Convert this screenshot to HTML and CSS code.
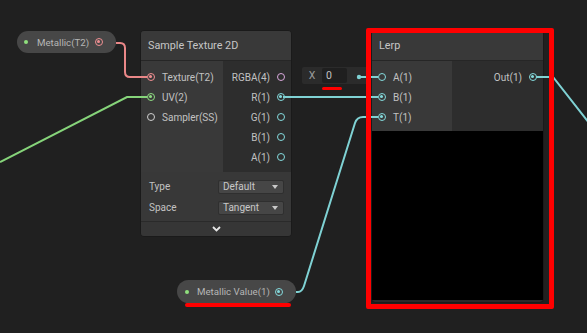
FILE: index.html
```html
<!DOCTYPE html>
<html lang="en">
<head>
  <meta charset="UTF-8" />
  <title>Shader Graph - Lerp</title>
  <link rel="stylesheet" href="styles.css">
</head>
<body>
  <div class="graph">

    <!-- property: Metallic(T2) -->
    <div class="prop prop-tex">
      <span class="prop-dot"></span>
      <span class="prop-name">Metallic(T2)</span>
      <span class="port pink on"></span>
    </div>

    <!-- Sample Texture 2D -->
    <div class="node node-sample">
      <div class="node-title">Sample Texture 2D</div>
      <div class="ports">
        <div class="ins">
          <div class="row"><span class="port pink on"></span>Texture(T2)</div>
          <div class="row"><span class="port green on"></span>UV(2)</div>
          <div class="row"><span class="port white"></span>Sampler(SS)</div>
        </div>
        <div class="outs">
          <div class="row">RGBA(4)<span class="port violet"></span></div>
          <div class="row">R(1)<span class="port cyan on"></span></div>
          <div class="row">G(1)<span class="port cyan"></span></div>
          <div class="row">B(1)<span class="port cyan"></span></div>
          <div class="row">A(1)<span class="port cyan"></span></div>
        </div>
      </div>
      <div class="settings">
        <div class="setting">
          <span class="setting-name">Type</span>
          <span class="dropdown">Default</span>
        </div>
        <div class="setting">
          <span class="setting-name">Space</span>
          <span class="dropdown">Tangent</span>
        </div>
      </div>
      <div class="collapse">
        <svg width="9" height="6" viewBox="0 0 9 6"><path d="M1 1 L4.5 4.5 L8 1" fill="none" stroke="#e6e6e6" stroke-width="1.8"/></svg>
      </div>
    </div>

    <!-- inline value for Lerp A -->
    <div class="field-x">
      <span class="field-label">X</span>
      <span class="field-input">0</span>
    </div>

    <!-- Lerp -->
    <div class="node node-lerp">
      <div class="node-title">Lerp</div>
      <div class="ports">
        <div class="ins">
          <div class="row"><span class="port cyan"></span>A(1)</div>
          <div class="row"><span class="port cyan on"></span>B(1)</div>
          <div class="row"><span class="port cyan on"></span>T(1)</div>
        </div>
        <div class="outs">
          <div class="row">Out(1)<span class="port cyan on"></span></div>
        </div>
      </div>
      <div class="preview"></div>
    </div>

    <!-- property: Metallic Value(1) -->
    <div class="prop prop-val">
      <span class="prop-dot"></span>
      <span class="prop-name">Metallic Value(1)</span>
      <span class="port cyan on"></span>
    </div>

    <!-- edges -->
    <svg class="wires" width="587" height="333" viewBox="0 0 587 333">
      <path d="M116 43 H120 Q125 43 125 48 V72 Q125 77 130 77 H147" stroke="#ea8788" />
      <path d="M0 162 L127 97 H147" stroke="#86d47a" />
      <path d="M283 97 H378" stroke="#7fd2d4" />
      <path d="M359 77 H378" stroke="#7fd2d4" />
      <path d="M296 292 H298 Q302 292 304 286 L355 123 Q357 117 363 117 H378" stroke="#7fd2d4" />
      <path d="M536 77 H553 L600 137" stroke="#7fd2d4" />
      <circle cx="359" cy="77" r="2.2" fill="#7fd2d4" />
    </svg>

    <!-- red annotations -->
    <div class="mark-box"></div>
    <div class="mark-line mark-x"></div>
    <div class="mark-line mark-val"></div>
  </div>
</body>
</html>
```

FILE: styles.css
```css
body {
  margin: 0;
  background: #202020;
  overflow: hidden;
}

.graph {
  position: relative;
  width: 587px;
  height: 333px;
  overflow: hidden;
  background: #202020;
  font-family: 'Roboto', 'Inter', sans-serif;
  color: #c2c2c2;
  white-space: nowrap;
}

/* ports */
.port {
  position: relative;
  width: 8px;
  height: 8px;
  box-sizing: border-box;
  border: 1.5px solid #c8c8c8;
  border-radius: 50%;
  flex-shrink: 0;
}

.port.on::after {
  content: '';
  position: absolute;
  left: 1px;
  top: 1px;
  width: 3px;
  height: 3px;
  border-radius: 50%;
  background: currentColor;
}

.port.pink { border-color: #f08f92; color: #f08f92; }
.port.green { border-color: #8fdc82; color: #8fdc82; }
.port.cyan { border-color: #84dadd; color: #84dadd; }
.port.violet { border-color: #d9a8dc; color: #d9a8dc; }
.port.white { border-color: #cfcfcf; color: #cfcfcf; }

/* property pills */
.prop {
  position: absolute;
  display: flex;
  align-items: center;
  box-sizing: border-box;
  background: #474747;
  font-size: 9.7px;
  color: #b6b6b6;
}

.prop-dot {
  width: 4px;
  height: 4px;
  border-radius: 50%;
  background: #8fe07d;
  flex-shrink: 0;
}

.prop .port {
  margin-left: auto;
}

.prop-tex {
  left: 17px;
  top: 31px;
  width: 99px;
  height: 22px;
  border-radius: 11px;
  padding: 0 13px 0 7px;
}

.prop-tex .prop-dot { margin-right: 9px; }

.prop-val {
  left: 177px;
  top: 280px;
  width: 119px;
  height: 23px;
  border-radius: 12px;
  padding: 0 13px 0 8px;
}

.prop-val .prop-dot { margin-right: 8px; }

/* nodes */
.node {
  position: absolute;
  display: flex;
  flex-direction: column;
  background: #2c2c2c;
  border: 1px solid #1a1a1a;
  border-radius: 4px;
  overflow: hidden;
}

.node-sample {
  left: 140px;
  top: 30px;
  width: 150px;
}

.node-lerp {
  left: 371px;
  top: 30px;
  width: 171px;
}

.node-title {
  height: 29px;
  display: flex;
  align-items: center;
  padding-left: 7px;
  background: #393939;
  border-bottom: 1px solid #262626;
  font-size: 10.8px;
  color: #c6c6c6;
}

.ports {
  display: flex;
}

.ins {
  background: #393939;
  padding: 6px 0 5px;
}

.outs {
  flex: 1;
  background: #2d2d2d;
  padding: 6px 0 5px;
}

.node-sample .ins { width: 82px; }
.node-lerp .ins { width: 80px; padding-bottom: 4px; }
.node-lerp .outs { padding-bottom: 4px; }

.row {
  height: 20px;
  display: flex;
  align-items: center;
  gap: 7px;
  font-size: 10px;
}

.ins .row {
  padding-left: 6px;
}

.outs .row {
  justify-content: flex-end;
  padding-right: 6px;
}

/* node settings */
.settings {
  background: #383838;
  padding: 4px 7px 3px 8px;
}

.setting {
  height: 21px;
  display: flex;
  align-items: center;
  justify-content: space-between;
  font-size: 10px;
}

.dropdown {
  position: relative;
  width: 66px;
  height: 14px;
  box-sizing: border-box;
  padding-left: 4px;
  line-height: 12px;
  background: #464646;
  border: 1px solid #2f2f2f;
  border-radius: 2px;
  color: #c8c8c8;
}

.dropdown::after {
  content: '';
  position: absolute;
  right: 5px;
  top: 4px;
  border-left: 3.5px solid transparent;
  border-right: 3.5px solid transparent;
  border-top: 4px solid #c8c8c8;
}

.collapse {
  height: 14px;
  display: flex;
  align-items: center;
  justify-content: center;
  background: #363636;
  border-top: 1px solid #2a2a2a;
}

.preview {
  height: 169px;
  background: #000;
  border-bottom: 2px solid #2a2a2a;
}

/* inline field */
.field-x {
  position: absolute;
  left: 302px;
  top: 67px;
  width: 66px;
  height: 17px;
  display: flex;
  align-items: center;
  background: #2b2b2b;
  border-radius: 2px;
  font-size: 10.5px;
}

.field-label {
  width: 20px;
  text-align: center;
  color: #9c9c9c;
}

.field-input {
  width: 21px;
  height: 15px;
  line-height: 15px;
  padding-left: 4px;
  background: #1f1f1f;
  border-radius: 2px;
  color: #c2c2c2;
}

/* wires */
.wires {
  position: absolute;
  left: 0;
  top: 0;
  pointer-events: none;
}

.wires path {
  fill: none;
  stroke-width: 2;
}

/* annotations */
.mark-box {
  position: absolute;
  left: 366px;
  top: 28px;
  width: 188px;
  height: 281px;
  box-sizing: border-box;
  border: 5px solid #ff0000;
  border-radius: 2px;
}

.mark-line {
  position: absolute;
  background: #ff0000;
  border-radius: 2px;
}

.mark-x {
  left: 322px;
  top: 87px;
  width: 20px;
  height: 3px;
}

.mark-val {
  left: 185px;
  top: 303px;
  width: 106px;
  height: 4px;
}
```
